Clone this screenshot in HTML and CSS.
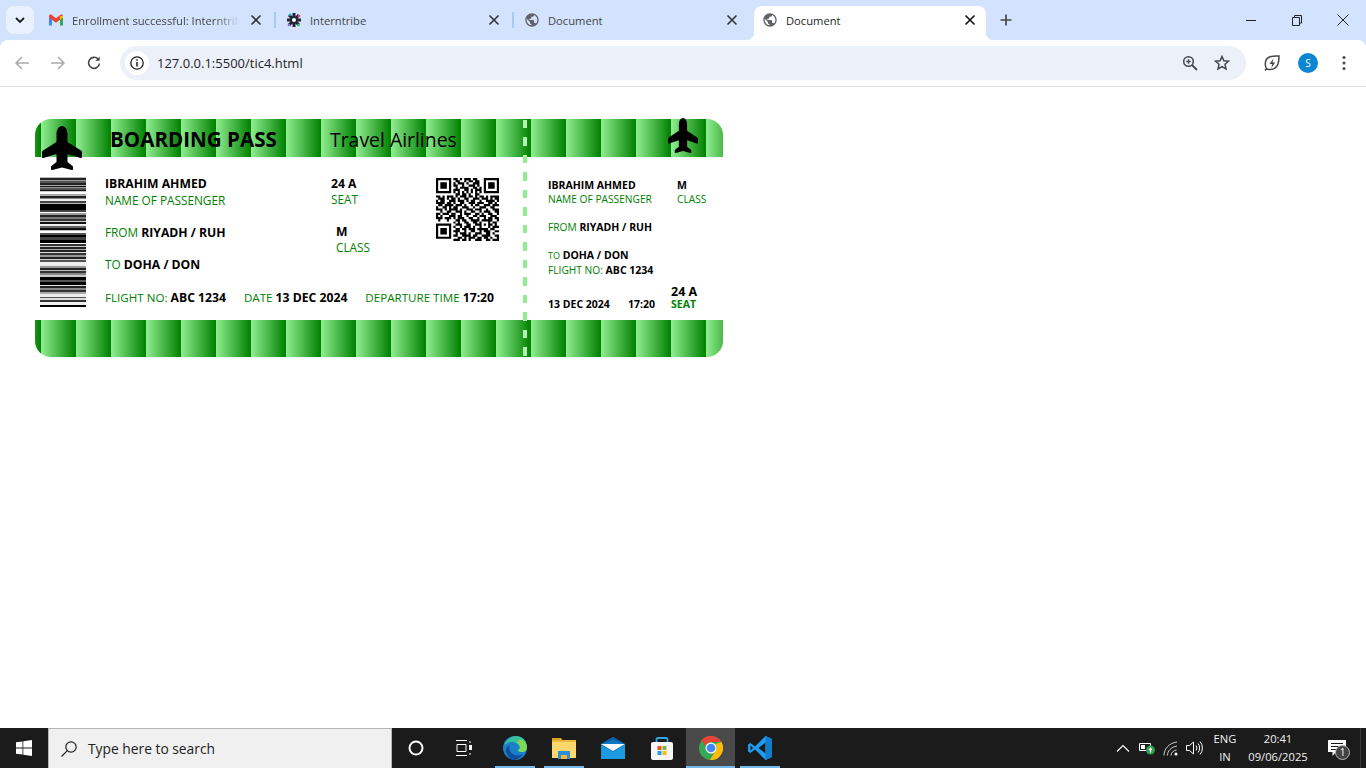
FILE: index.html
```html
<!DOCTYPE html>
<html lang="en">
<head>
<meta charset="utf-8">
<title>Document</title>
<link rel="stylesheet" href="styles.css">
</head>
<body>
<svg class="defs" aria-hidden="true">
  <symbol id="globe" viewBox="0 0 24 24"><path d="M12 2C6.48 2 2 6.48 2 12s4.48 10 10 10 10-4.48 10-10S17.52 2 12 2zm-1 17.93c-3.95-.49-7-3.85-7-7.93 0-.62.08-1.21.21-1.79L9 15v1c0 1.1.9 2 2 2v1.93zm6.9-2.54c-.26-.81-1-1.39-1.9-1.39h-1v-3c0-.55-.45-1-1-1H8v-2h2c.55 0 1-.45 1-1V7h2c1.1 0 2-.9 2-2v-.41c2.93 1.19 5 4.06 5 7.41 0 2.08-.8 3.97-2.1 5.39z"/></symbol>
  <symbol id="close" viewBox="0 0 16 16"><path d="M3.5 3.5l9 9M12.5 3.5l-9 9" fill="none" stroke="currentColor" stroke-width="1.6"/></symbol>
  <symbol id="plane" viewBox="0 0 40 44" preserveAspectRatio="none"><path d="M20 0c3.500 0 5.500 4 5.500 8v8L39 24.500c.7.500 1 1 1 2V31c0 1-.7 1.300-1.500 1L25.500 28v8l5 4c.4.400.5.700.5 1v2c0 .8-.5 1.200-1.300 1L20 41.500 10.300 44c-.8.200-1.300-.2-1.300-1v-2c0-.3.100-.6.500-1l5-4v-8L1.500 32C.7 32.300 0 32 0 31v-4.500c0-1 .3-1.500 1-2L14.500 16V8c0-4 2-8 5.500-8z"/></symbol>
</svg>

<header class="browser">
  <div class="tabstrip">
    <button class="tab-search"><svg width="12" height="12" viewBox="0 0 12 12"><path d="M2 4l4 4 4-4" fill="none" stroke="#1f1f1f" stroke-width="1.8"/></svg></button>
    <div class="tab">
      <svg class="fav" viewBox="0 0 16 16"><path d="M1 5v8.5h3V7z" fill="#4285f4"/><path d="M15 5v8.5h-3V7z" fill="#34a853"/><path d="M1 5.500V4c0-1.300 1.500-2 2.500-1.200L8 6.300l4.500-3.500C13.500 2 15 2.700 15 4v1.500L8 10.800z" fill="#ea4335"/><path d="M12 4.200l3-.6v2L12 8z" fill="#fbbc04"/></svg>
      <span class="tab-title fade">Enrollment successful: Interntribe</span>
      <svg class="tab-x"><use href="#close"/></svg>
    </div>
    <div class="tab">
      <svg class="fav" viewBox="0 0 16 16"><path d="M8 1v14M1 8h14M3 3l10 10M13 3L3 13" stroke="#222633" stroke-width="3"/><circle cx="8" cy="8" r="2" fill="#fff"/><circle cx="4" cy="2.500" r="1.300" fill="#35b8e0"/><circle cx="13" cy="4" r="1.300" fill="#d8409c"/><circle cx="3" cy="13" r="1.300" fill="#9a6be0"/><circle cx="12.500" cy="13" r="1.300" fill="#3cc06a"/></svg>
      <span class="tab-title">Interntribe</span>
      <svg class="tab-x"><use href="#close"/></svg>
    </div>
    <div class="tab last">
      <svg class="fav globe"><use href="#globe"/></svg>
      <span class="tab-title">Document</span>
      <svg class="tab-x"><use href="#close"/></svg>
    </div>
    <div class="tab active">
      <svg class="fav globe"><use href="#globe"/></svg>
      <span class="tab-title">Document</span>
      <svg class="tab-x"><use href="#close"/></svg>
    </div>
    <button class="newtab"><svg width="14" height="14" viewBox="0 0 14 14"><path d="M7 1.500v11M1.500 7h11" stroke="#444746" stroke-width="1.700"/></svg></button>
    <div class="winctl">
      <span class="win"><svg width="12" height="12" viewBox="0 0 12 12"><path d="M1 6.500h10" stroke="#222" stroke-width="1"/></svg></span>
      <span class="win"><svg width="12" height="12" viewBox="0 0 12 12"><path d="M1.500 3.500h7v8h-7zM3.500 3.500V1.500h7v7.500H8.500" fill="none" stroke="#222" stroke-width="1"/></svg></span>
      <span class="win"><svg width="12" height="12" viewBox="0 0 12 12"><path d="M.5.500l11 11M11.500.500l-11 11" stroke="#222" stroke-width="1"/></svg></span>
    </div>
  </div>
  <div class="toolbar">
    <span class="tbtn"><svg width="16" height="16" viewBox="0 0 16 16"><path d="M15 8H2M8 2L2 8l6 6" fill="none" stroke="#a9abad" stroke-width="1.500"/></svg></span>
    <span class="tbtn"><svg width="16" height="16" viewBox="0 0 16 16"><path d="M1 8h13M8 2l6 6-6 6" fill="none" stroke="#a9abad" stroke-width="1.500"/></svg></span>
    <span class="tbtn"><svg width="16" height="16" viewBox="0 0 16 16"><path d="M13.500 8.500A5.500 5.500 0 1 1 12 4" fill="none" stroke="#444746" stroke-width="1.600"/><path d="M13.700 1.500v4.300H9.400z" fill="#444746"/></svg></span>
    <div class="omnibox">
      <span class="site-info"><svg width="16" height="16" viewBox="0 0 16 16"><circle cx="8" cy="8" r="6.200" fill="none" stroke="#1f1f1f" stroke-width="1.300"/><path d="M8 7v4.500M8 4.300v1.500" stroke="#1f1f1f" stroke-width="1.500"/></svg></span>
      <span class="url">127.0.0.1:5500/tic4.html</span>
      <svg width="16" height="16" viewBox="0 0 16 16"><circle cx="6.500" cy="6.500" r="4.800" fill="none" stroke="#444746" stroke-width="1.500"/><path d="M10 10l5 5" stroke="#444746" stroke-width="1.800"/><path d="M6.500 4.300v4.400M4.300 6.500h4.400" stroke="#444746" stroke-width="1.300"/></svg>
      <svg width="16" height="16" viewBox="0 0 16 16"><path d="M8 1.500l1.900 4.300 4.600.4-3.500 3.100 1 4.600L8 11.500l-4 2.400 1-4.600-3.500-3.100 4.600-.4z" fill="none" stroke="#444746" stroke-width="1.500"/></svg>
    </div>
    <span class="tbtn ext"><svg width="18" height="18" viewBox="0 0 18 18"><path d="M16 2c0 0-7-.5-10.500 1.500C2.500 5.300 2 9 2.500 12c.2 1.500 1.500 3.500 4.500 3.500 4 0 6.500-2 8-5.500 1-2.800 1-8 1-8zM2 16.500l2-2.500" fill="none" stroke="#444746" stroke-width="1.500"/><path d="M10.500 4.500L6.500 10h2.800l-1 4 4-5.500H9.500z" fill="#444746"/></svg></span>
    <span class="tbtn"><span class="avatar">S</span></span>
    <span class="tbtn"><svg width="4" height="16" viewBox="0 0 4 16"><circle cx="2" cy="2.500" r="1.500" fill="#444746"/><circle cx="2" cy="8" r="1.500" fill="#444746"/><circle cx="2" cy="13.500" r="1.500" fill="#444746"/></svg></span>
  </div>
</header>

<main class="page">
  <article class="pass">
    <div class="band band-top">
      <h1 class="bp-title">BOARDING PASS</h1>
      <span class="airline">Travel Airlines</span>
    </div>
    <svg class="plane plane-main"><use href="#plane"/></svg>
    <svg class="plane plane-stub"><use href="#plane"/></svg>

    <div class="pass-body">
      <section class="main">
        <div class="barcode"></div>
        <div class="details">
          <div class="detail-top">
            <div class="col-a">
              <div class="block"><b>IBRAHIM AHMED</b><span class="lbl">NAME OF PASSENGER</span></div>
              <div class="line"><span class="lbl">FROM</span> <b>RIYADH / RUH</b></div>
              <div class="line"><span class="lbl">TO</span> <b>DOHA / DON</b></div>
            </div>
            <div class="col-b">
              <div class="block"><b>24 A</b><span class="lbl">SEAT</span></div>
              <div class="block block-class"><b>M</b><span class="lbl">CLASS</span></div>
            </div>
            <svg class="qr" viewBox="0 0 29 29"><path d="M0 .5h7M8 .5h2M11 .5h1M13 .5h3M17 .5h2M22 .5h7M0 1.500h1M6 1.500h1M9 1.500h2M13 1.500h1M15 1.500h2M18 1.500h2M22 1.500h1M28 1.500h1M0 2.500h1M2 2.500h3M6 2.500h1M8 2.500h1M10 2.500h3M14 2.500h1M17 2.500h3M22 2.500h1M24 2.500h3M28 2.500h1M0 3.500h1M2 3.500h3M6 3.500h1M8 3.500h2M12 3.500h1M15 3.500h3M19 3.500h1M22 3.500h1M24 3.500h3M28 3.500h1M0 4.500h1M2 4.500h3M6 4.500h1M9 4.500h1M11 4.500h4M17 4.500h2M20 4.500h1M22 4.500h1M24 4.500h3M28 4.500h1M0 5.500h1M6 5.500h1M8 5.500h3M13 5.500h2M16 5.500h1M18 5.500h3M22 5.500h1M28 5.500h1M0 6.500h7M8 6.500h1M10 6.500h1M12 6.500h1M14 6.500h1M16 6.500h1M18 6.500h1M20 6.500h1M22 6.500h7M9 7.500h2M12 7.500h2M15 7.500h1M18 7.500h2M0 8.500h2M3 8.500h1M5 8.500h3M9 8.500h1M11 8.500h3M15 8.500h2M18 8.500h1M20 8.500h2M23 8.500h1M25 8.500h4M1 9.500h3M5 9.500h1M7 9.500h2M10 9.500h1M13 9.500h2M17 9.500h3M21 9.500h3M25 9.500h1M27 9.500h2M0 10.500h1M2 10.500h2M6 10.500h3M10 10.500h3M14 10.500h1M16 10.500h2M20 10.500h1M23 10.500h4M28 10.500h1M0 11.500h4M5 11.500h2M8 11.500h1M11 11.500h2M15 11.500h3M19 11.500h3M24 11.500h2M27 11.500h1M1 12.500h2M4 12.500h4M9 12.500h3M13 12.500h1M16 12.500h1M18 12.500h2M22 12.500h3M26 12.500h3M0 13.500h1M3 13.500h2M6 13.500h1M8 13.500h2M12 13.500h3M17 13.500h1M20 13.500h3M25 13.500h2M0 14.500h3M4 14.500h1M6 14.500h4M11 14.500h1M14 14.500h3M18 14.500h3M23 14.500h1M26 14.500h3M2 15.500h1M5 15.500h2M9 15.500h3M13 15.500h1M16 15.500h2M20 15.500h1M22 15.500h3M27 15.500h2M0 16.500h2M3 16.500h3M7 16.500h2M11 16.500h1M13 16.500h3M18 16.500h2M21 16.500h1M24 16.500h2M28 16.500h1M0 17.500h1M2 17.500h1M6 17.500h3M10 17.500h2M14 17.500h1M17 17.500h2M20 17.500h3M25 17.500h3M0 18.500h3M4 18.500h3M8 18.500h1M10 18.500h3M15 18.500h2M19 18.500h1M22 18.500h1M24 18.500h2M27 18.500h2M1 19.500h1M5 19.500h1M9 19.500h2M12 19.500h2M16 19.500h4M21 19.500h5M28 19.500h1M8 20.500h1M10 20.500h1M13 20.500h2M17 20.500h2M20 20.500h1M24 20.500h1M26 20.500h2M0 21.500h7M9 21.500h3M14 21.500h2M18 21.500h3M22 21.500h1M24 21.500h2M27 21.500h1M0 22.500h1M6 22.500h1M8 22.500h1M11 22.500h1M13 22.500h3M17 22.500h1M20 22.500h1M24 22.500h1M26 22.500h3M0 23.500h1M2 23.500h3M6 23.500h1M9 23.500h2M12 23.500h2M15 23.500h3M19 23.500h5M25 23.500h2M0 24.500h1M2 24.500h3M6 24.500h1M8 24.500h3M13 24.500h1M16 24.500h2M20 24.500h1M22 24.500h3M27 24.500h2M0 25.500h1M2 25.500h3M6 25.500h1M9 25.500h1M11 25.500h3M15 25.500h1M18 25.500h3M23 25.500h2M26 25.500h1M0 26.500h1M6 26.500h1M8 26.500h2M12 26.500h4M17 26.500h2M21 26.500h4M27 26.500h2M0 27.500h7M10 27.500h2M13 27.500h1M15 27.500h3M19 27.500h2M22 27.500h2M25 27.500h1M28 27.500h1M8 28.500h3M12 28.500h2M15 28.500h1M18 28.500h3M23 28.500h2M26 28.500h3" stroke="#000" stroke-width="1" fill="none"/></svg>
          </div>
          <div class="detail-bottom">
            <span><span class="lbl">FLIGHT NO:</span> <b>ABC 1234</b></span>
            <span><span class="lbl">DATE</span> <b>13 DEC 2024</b></span>
            <span><span class="lbl">DEPARTURE TIME</span> <b>17:20</b></span>
          </div>
        </div>
      </section>
      <section class="stub">
        <div class="stub-top">
          <div class="block stub-name"><b>IBRAHIM AHMED</b><span class="lbl">NAME OF PASSENGER</span></div>
          <div class="block"><b>M</b><span class="lbl">CLASS</span></div>
        </div>
        <div class="line stub-from"><span class="lbl">FROM</span> <b>RIYADH / RUH</b></div>
        <div class="line stub-to"><span class="lbl small">TO</span> <b>DOHA / DON</b></div>
        <div class="line"><span class="lbl">FLIGHT NO:</span> <b>ABC 1234</b></div>
        <div class="stub-bottom">
          <b class="stub-date">13 DEC 2024</b>
          <b class="stub-time">17:20</b>
          <div class="block"><b class="seat-no">24 A</b><b class="seat-lbl">SEAT</b></div>
        </div>
      </section>
    </div>

    <div class="band band-bottom"></div>
    <div class="perforation"></div>
  </article>
</main>

<footer class="taskbar">
  <span class="start"><svg width="16" height="16" viewBox="0 0 16 16"><path d="M0 2.300l6.500-.9v6.200H0zM7.300 1.300L16 0v7.600H7.300zM0 8.400h6.500v6.200L0 13.700zM7.300 8.400H16V16l-8.700-1.200z" fill="#fff"/></svg></span>
  <div class="searchbox">
    <svg width="18" height="18" viewBox="0 0 18 18"><circle cx="11" cy="7" r="5.200" fill="none" stroke="#222" stroke-width="1.200"/><path d="M7.300 10.700L1.500 16.500" stroke="#222" stroke-width="1.200"/></svg>
    <span>Type here to search</span>
  </div>
  <span class="tk"><svg width="16" height="16" viewBox="0 0 16 16"><circle cx="8" cy="8" r="6.500" fill="none" stroke="#fff" stroke-width="2"/></svg></span>
  <span class="tk tk-view"><svg width="18" height="16" viewBox="0 0 18 16"><path d="M1 .5h11M1 15.500h11M2 4.500h9v7H2zM15 1v2M15 13v2" fill="none" stroke="#fff" stroke-width="1"/><rect x="14" y="5" width="3" height="5" fill="#fff"/></svg></span>
  <span class="app run"><svg width="24" height="24" viewBox="0 0 24 24"><circle cx="12" cy="12" r="12" fill="#1b7ec8"/><path d="M1 10C3 3 9 0 13 0c6 0 11 4.500 11 11 0 3-2 5-5 5-3 0-4-1-4.500-2 2-.5 2.500-2 2-3.500C15.500 7.500 12 6 8.500 6 5 6 2.500 8 1 10z" fill="#35c0a0"/><path d="M17 3c4 1 7 4 7 8 0 3-2 5-5 5-2 0-3.500-.7-4.200-1.800 2-.6 2.600-2.200 2-3.700-.5-1.500-1.800-2.800-3.300-3.700C14.500 6 16 4.500 17 3z" fill="#7fd858"/><path d="M4 18c-2-3-1-7 3-9-1.500 2.500-1 6 2 8.500 3 2.300 7 2.300 10.500.8C17 22.500 13 24 10 24c-2.500 0-4.500-3-6-6z" fill="#0d4f9c"/></svg></span>
  <span class="app run"><svg width="24" height="22" viewBox="0 0 24 22"><path d="M0 1h9l2 3H0z" fill="#d9a21f"/><path d="M0 3h24v18H0z" fill="#fcd76c"/><path d="M0 3h24v2H0z" fill="#e9b93d"/><path d="M6 22v-8h12v8h-3v-4H9v4z" fill="#2f8fd6"/><path d="M9 18h6v4H9z" fill="#f4b63b"/></svg></span>
  <span class="app"><svg width="24" height="22" viewBox="0 0 24 22"><path d="M12 0L0 7v15h24V7z" fill="#0f78c8"/><path d="M0 7h24l-12 7z" fill="#fff"/><path d="M0 7l12-7 12 7-12-4z" fill="#0a5ea8"/><path d="M0 8l12 7 12-7v14H0z" fill="#1e9be0"/></svg></span>
  <span class="app"><svg width="24" height="24" viewBox="0 0 24 24"><path d="M6.500 7V3.500C6.500 2.500 7 2 8 2h8c1 0 1.500.5 1.500 1.500V7" fill="none" stroke="#2ba6e8" stroke-width="1.800"/><rect x="1" y="6" width="22" height="18" rx="2" fill="#f6f6f6"/><rect x="7.500" y="10" width="4" height="4" fill="#e8512d"/><rect x="12.500" y="10" width="4" height="4" fill="#7cb93a"/><rect x="7.500" y="15" width="4" height="4" fill="#1f9fe8"/><rect x="12.500" y="15" width="4" height="4" fill="#f9bb1a"/></svg></span>
  <span class="app run current"><svg width="24" height="24" viewBox="0 0 24 24"><circle cx="12" cy="12" r="12" fill="#34a853"/><path d="M12 0a12 12 0 0 1 10.400 6H12a6 6 0 0 0-5.600 3.800L2.400 4.300A12 12 0 0 1 12 0z" fill="#ea4335"/><path d="M22.400 6A12 12 0 0 1 11 24l5-8.800A6 6 0 0 0 16.500 8z" fill="#fbbc04"/><circle cx="12" cy="12" r="5.500" fill="#fff"/><circle cx="12" cy="12" r="4.300" fill="#4285f4"/></svg></span>
  <span class="app run"><svg width="24" height="24" viewBox="0 0 24 24"><path d="M17.500 0L24 3v18l-6.500 3L7 13.500 2.500 17 0 15.500V8.500L2.500 7 7 10.500z" fill="#1f9cf0"/><path d="M17.500 6.500L10.500 12l7 5.500z" fill="#1b1b1b"/><path d="M2.500 9.500L5 12l-2.500 2.500z" fill="#1b1b1b"/><path d="M17.500 0L24 3v18l-6.500 3z" fill="#0f7fcc"/></svg></span>
  <div class="tray">
    <span class="ti"><svg width="14" height="8" viewBox="0 0 14 8"><path d="M1 7.500l6-6 6 6" fill="none" stroke="#fff" stroke-width="1.100"/></svg></span>
    <span class="ti"><svg width="16" height="14" viewBox="0 0 16 14"><path d="M.5 2.500h11v7H.5z" fill="none" stroke="#fff"/><rect x="2" y="4" width="4" height="4" fill="#fff"/><circle cx="11.500" cy="9" r="4.500" fill="#2e9e4f"/><path d="M11.500 6l2 3h-1.300v2.500h-1.400V9H9.500z" fill="#fff"/></svg></span>
    <span class="ti"><svg width="17" height="15" viewBox="0 0 17 15"><g fill="none" stroke="#ccc"><path d="M1 14.500C1 8 6 2 14 1"/><path d="M4.500 14.500C4.500 10 8 6 14 5"/><path d="M8 14.500c0-2.500 2-5 5.500-5.500"/></g><circle cx="13" cy="13" r="1.500" fill="#fff"/></svg></span>
    <span class="ti"><svg width="18" height="14" viewBox="0 0 18 14"><path d="M.5 4.500h3L7.500 1v12l-4-3.500h-3z" fill="none" stroke="#fff"/><path d="M10 4.500a4 4 0 0 1 0 5M12 2.500a7 7 0 0 1 0 9M14 .5a10 10 0 0 1 0 13" fill="none" stroke="#fff"/></svg></span>
    <div class="lang"><span>ENG</span><span>IN</span></div>
    <div class="clock"><span>20:41</span><span>09/06/2025</span></div>
    <span class="notif"><svg width="18" height="16" viewBox="0 0 18 16"><path d="M0 0h18v12H8l-3.500 4v-4H0z" fill="#fff"/><path d="M3 3.500h12M3 6.500h12M3 9.500h8" stroke="#1b1b1b"/></svg><span class="badge">1</span></span>
  </div>
</footer>
</body>
</html>
```
FILE: styles.css
```css
* { box-sizing: border-box; }
html, body { margin: 0; height: 100%; }
body {
  display: flex;
  flex-direction: column;
  height: 768px;
  overflow: hidden;
  background: #fff;
  font-family: "Open Sans", "Noto Sans", sans-serif;
  color: #000;
}
button { border: 0; padding: 0; background: none; font: inherit; }
svg { display: block; flex: none; }
.defs { position: absolute; width: 0; height: 0; }

/* browser chrome */
.browser { flex: none; background: #d3e3fd; }
.tabstrip { display: flex; height: 40px; }
.tab-search {
  width: 28px; height: 28px; margin: 6px 3px 0 6px;
  display: flex; align-items: center; justify-content: center;
  background: #e9f0fe; border-radius: 8px;
}
.tab {
  position: relative;
  width: 238px; height: 34px; margin-top: 6px;
  padding: 0 11px 6px 11px;
  display: flex; align-items: center; gap: 8px;
  color: #444746; font-size: 11.2px;
}
.tab::after {
  content: ""; position: absolute; right: -1px; top: 6px;
  width: 2px; height: 16px; background: #a8c7fa;
}
.tab.last::after, .tab.active::after { display: none; }
.fav { width: 16px; height: 16px; }
.globe { fill: #5f6368; }
.tab-title { flex: 1; overflow: hidden; white-space: nowrap; }
.fade { -webkit-mask-image: linear-gradient(90deg, #000 85%, transparent 100%); mask-image: linear-gradient(90deg, #000 85%, transparent 100%); }
.tab-x { width: 16px; height: 16px; color: #333; }
.tab.active {
  width: 232px; margin: 6px 3px 0;
  padding: 0 8px 6px 8px;
  background: #fff; border-radius: 8px 8px 0 0;
  color: #1f1f1f;
}
.tab.active .tab-x { color: #111; }
.tab.active::before, .tab.active::after {
  content: ""; display: block; position: absolute; top: auto; bottom: 0;
  width: 8px; height: 8px;
}
.tab.active::before { left: -8px; right: auto; background: radial-gradient(circle at 0 0, transparent 8px, #fff 8.5px); }
.tab.active::after { right: -8px; left: auto; background: radial-gradient(circle at 100% 0, transparent 8px, #fff 8.5px); }
.newtab { width: 28px; height: 28px; margin: 6px 0 0 3px; display: flex; align-items: center; justify-content: center; }
.winctl { margin-left: auto; display: flex; }
.win { width: 46px; height: 40px; display: flex; align-items: center; justify-content: center; }

.toolbar {
  height: 47px;
  padding: 0 4px;
  display: flex; align-items: center;
  background: #fff;
  border-radius: 8px 8px 0 0;
  border-bottom: 1px solid #e1e3e6;
}
.tbtn { width: 36px; height: 34px; display: flex; align-items: center; justify-content: center; }
.omnibox {
  width: 1126px; height: 34px; margin: 0 8px;
  padding: 0 16px 0 5px;
  display: flex; align-items: center; gap: 16px;
  background: #ebf0f9; border-radius: 17px;
}
.site-info { width: 24px; height: 24px; margin-right: -8px; background: #fff; border-radius: 50%; display: flex; align-items: center; justify-content: center; }
.url { flex: 1; font-size: 13px; color: #1f1f1f; }
.avatar { width: 20px; height: 20px; border-radius: 50%; background: #0a86d3; color: #fff; font-size: 10px; display: flex; align-items: center; justify-content: center; }

/* page */
.page { flex: 1; padding: 32px 0 0 35px; }
.pass { position: relative; width: 688px; height: 238px; }
.band {
  background: linear-gradient(90deg, #90ee90, #008000) 6px 0 / 35px 100% repeat-x #008000;
}
.band-top {
  height: 38px; padding: 3px 0 0 75px;
  display: flex; align-items: center;
  border-radius: 16px 16px 0 0;
}
.band-bottom { height: 37px; border-radius: 0 0 16px 16px; }
.bp-title { margin: 0; width: 220px; font-size: 20.6px; font-weight: 700; line-height: 35px; white-space: nowrap; }
.airline { font-size: 19.4px; line-height: 35px; white-space: nowrap; }
.plane { position: absolute; fill: #000; }
.plane-main { left: 7px; top: 7px; width: 40px; height: 44px; }
.plane-stub { left: 633px; top: -1px; width: 30px; height: 35px; }
.perforation {
  position: absolute; left: 488px; top: 0; bottom: 0; width: 4px;
  background: linear-gradient(#b4f2b4 0 38px, #90ee90 0 201px, #b4f2b4 0);
  -webkit-mask-image: repeating-linear-gradient(#000 0 8px, transparent 8px 17.5px);
  mask-image: repeating-linear-gradient(#000 0 8px, transparent 8px 17.5px);
  -webkit-mask-position: 0 1px;
  mask-position: 0 1px;
  -webkit-mask-repeat: no-repeat;
  mask-repeat: no-repeat;
}

.pass-body { height: 163px; display: flex; }
.main { width: 492px; display: flex; padding: 20px 0 0 5px; }
.barcode {
  width: 46px; height: 130px;
  background: linear-gradient(#bbb 0 1px, #222 0 3px, #999 0 4px, #555 0 6px, #222 0 8px, #aaa 0 9px, #111 0 10px, #999 0 11px, #555 0 13px, #111 0 14px, #ccc 0 15px, #fff 0 17px, #aaa 0 19px, #222 0 21px, #888 0 22px, #eee 0 24px, #444 0 26px, #bbb 0 27px, #000 0 33px, #444 0 35px, #fff 0 36px, #999 0 38px, #222 0 40px, #777 0 42px, #333 0 44px, #ccc 0 45px, #111 0 47px, #eee 0 49px, #666 0 51px, #111 0 53px, #bbb 0 54px, #fff 0 56px, #555 0 58px, #000 0 60px, #444 0 63px, #000 0 66px, #fff 0 67px, #333 0 69px, #ccc 0 70px, #222 0 72px, #aaa 0 73px, #222 0 75px, #ddd 0 76px, #333 0 78px, #999 0 80px, #222 0 82px, #ccc 0 83px, #555 0 85px, #eee 0 89px, #999 0 91px, #222 0 93px, #bbb 0 94px, #333 0 96px, #888 0 98px, #ccc 0 100px, #000 0 103px, #555 0 105px, #000 0 108px, #ddd 0 109px, #222 0 111px, #888 0 113px, #333 0 115px, #aaa 0 117px, #eee 0 120px, #555 0 121px, #ddd 0 123px, #333 0 125px, #eee 0 128px, #000 0 130px);
}
.details { width: 395px; margin-left: 19px; }
.detail-top { display: flex; height: 96px; margin-top: -1px; }
.col-a { width: 226px; display: flex; flex-direction: column; gap: 16px; }
.col-a .line:last-child { margin-top: -1px; }
.col-b { width: 105px; display: flex; flex-direction: column; gap: 17px; }
.col-b .lbl { margin-top: -1px; }
.block-class { margin-left: 5px; }
.details, .stub { line-height: 16px; white-space: nowrap; }
.details { font-size: 11.8px; }
.details b { font-size: 12.2px; }
.block { display: flex; flex-direction: column; }
.details b, .stub b { font-weight: 700; }
.lbl { color: #008000; font-weight: 400; }
.qr { width: 63px; height: 63px; margin-top: 2px; }
.detail-bottom { display: flex; gap: 18px; margin-top: 17px; }
.detail-bottom .lbl { font-size: 11.6px; }

.stub { flex: 1; padding: 21px 0 0 21px; font-size: 10.5px; line-height: 14px; }
.stub .lbl { font-size: 10.2px; }
.stub-top { display: flex; }
.stub-name { width: 129px; }
.stub-from { margin-top: 14px; }
.stub-to { margin-top: 14px; }
.stub .small { font-size: 9px; }
.stub-bottom { display: flex; align-items: flex-end; margin-top: 9px; }
.stub-date { width: 80px; }
.stub-time { width: 43px; }
.seat-no { font-size: 12.5px; line-height: 11px; }
.seat-lbl { color: #008000; line-height: 14px; }

/* taskbar */
.taskbar { flex: none; height: 40px; display: flex; align-items: center; background: #1b1b1b; }
.start { width: 48px; height: 40px; display: flex; align-items: center; justify-content: center; }
.searchbox {
  width: 344px; height: 40px; padding-left: 11px;
  display: flex; align-items: center; gap: 10px;
  background: #f0f0f0; border: 1px solid #b5b5b5; border-bottom: 0;
  color: #222; font-size: 13.8px;
}
.tk { width: 48px; height: 40px; display: flex; align-items: center; justify-content: center; }
.tk-view { margin-right: 2px; }
.app { width: 49px; height: 40px; display: flex; align-items: center; justify-content: center; }
.run { background: linear-gradient(#76b9ed, #76b9ed) center bottom / 40px 2px no-repeat; }
.current { background: linear-gradient(#76b9ed, #76b9ed) center bottom / 100% 2px no-repeat #4a4a4a; }
.tray { margin-left: auto; display: flex; align-items: center; height: 40px; color: #f2f2f2; font-size: 11.2px; padding-right: 5px; }
.ti { width: 24px; height: 40px; display: flex; align-items: center; justify-content: center; }
.lang, .clock { display: flex; flex-direction: column; align-items: center; line-height: 18px; }
.lang { width: 36px; }
.clock { width: 70px; }
.notif { position: relative; width: 48px; height: 40px; border-right: 1px solid #3a3a3a; display: flex; align-items: center; justify-content: center; }
.badge { position: absolute; left: 22px; top: 17px; width: 15px; height: 15px; border-radius: 50%; background: #444; border: 1px solid #bbb; font-size: 10px; line-height: 13px; text-align: center; color: #fff; }
```
